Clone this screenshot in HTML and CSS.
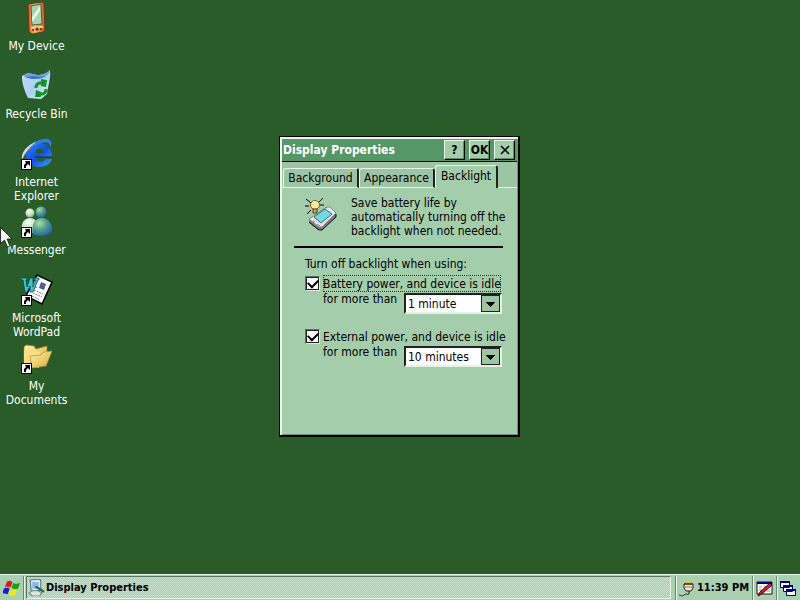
FILE: index.html
```html
<!DOCTYPE html>
<html lang="en">
<head>
<meta charset="utf-8">
<title>Display Properties</title>
<link rel="stylesheet" href="styles.css">
</head>
<body>
<svg width="0" height="0" class="defs" aria-hidden="true">
  <defs>
    <linearGradient id="gold" x1="0" y1="0" x2="1" y2="1"><stop offset="0" stop-color="#fff3a8"/><stop offset="1" stop-color="#d9a93c"/></linearGradient>
    <linearGradient id="bin" x1="0" y1="0" x2="1" y2="1"><stop offset="0" stop-color="#e6f4ff"/><stop offset=".5" stop-color="#a9cdf0"/><stop offset="1" stop-color="#e8f4fb"/></linearGradient>
    <linearGradient id="blue" x1="0" y1="0" x2="1" y2="1"><stop offset="0" stop-color="#2f86f0"/><stop offset=".5" stop-color="#1450d8"/><stop offset="1" stop-color="#3c9cff"/></linearGradient>
    <linearGradient id="orange" x1="0" y1="0" x2="1" y2="0"><stop offset="0" stop-color="#c4641c"/><stop offset=".4" stop-color="#ffb466"/><stop offset="1" stop-color="#b4601f"/></linearGradient>
    <radialGradient id="teal" cx=".35" cy=".3" r=".8"><stop offset="0" stop-color="#a8dcae"/><stop offset=".5" stop-color="#4f9c84"/><stop offset="1" stop-color="#2058c0"/></radialGradient>
    <radialGradient id="pale" cx=".4" cy=".3" r=".8"><stop offset="0" stop-color="#fbfff6"/><stop offset=".6" stop-color="#b8dcb8"/><stop offset="1" stop-color="#4c8cb0"/></radialGradient>
    <g id="shortcut">
      <rect x=".5" y="21.500" width="10" height="10" fill="#fff" stroke="#000"/>
      <path d="M4 23h5v5l-2-2-2 2v2H3v-3l2-2z" fill="#000"/>
    </g>
  </defs>
</svg>
<main class="desktop">
  <nav class="icons" aria-label="Desktop">
    <a class="item" href="#device">
      <svg viewBox="0 0 32 32"><path d="M7 2l14-2 2 1 1 27-2 2-11 2-3-2z" fill="url(#orange)" stroke="#6e3510"/><path d="M10 4l10-2 1 20-10 1z" fill="#a9d4b2" stroke="#4d5f4a"/><path d="M11 15l8-11v5l-8 11z" fill="#e5f7e2"/><path d="M10 26l12-1" stroke="#ffd08a" stroke-width="2"/><circle cx="12" cy="28" r="1" fill="#5a2a0c"/><circle cx="16" cy="27" r="1.500" fill="#5a2a0c"/><circle cx="20" cy="27" r="1" fill="#5a2a0c"/></svg>
      <span>My Device</span>
    </a>
    <a class="item" href="#bin">
      <svg viewBox="0 0 32 32"><path d="M1 6l6-3 9 2c5 0 9-1 13-5 1 8-2 16-3 24l-6 5-13-1C4 22 1 14 1 6z" fill="url(#bin)"/><path d="M2 6l5-3 9 2c5 0 9-1 13-5 0 4-6 9-14 9-5 0-9-1-13-3z" fill="#6da2e2"/><path d="M4 7c7 3 15 3 22-2-4 2-9 2-13 1z" fill="#3c74c8"/><path d="M2 7l11 3c-3 6-4 10-5 17C4 20 2 14 2 7z" fill="#b4d4f6"/><g fill="none" stroke="#12942a" stroke-width="3"><path d="M15 18c0-5 4-6 7-4"/><path d="M25 19c0 5-4 6-7 4"/></g><path d="M20 9l6 1-1 7-5-1zM20 27l-6 0 1-7 5 2z" fill="#12942a"/></svg>
      <span>Recycle Bin</span>
    </a>
    <a class="item" href="#internet">
      <svg viewBox="0 0 32 32"><path fill-rule="evenodd" d="M18 5c8 0 13 5 13 14H15c1 6 8 6 9 2h7c-2 5-6 8-13 8C10 29 5 24 5 17S10 5 18 5zM14 15h9c0-6-8-6-9 0z" fill="url(#blue)"/><path d="M14 19h17" stroke="#0a2878"/><path d="M1 23C-1 13 10 3 23 1c7-1 9 3 6 9 1-5-3-7-9-5C11 8 4 14 1 23z" fill="#2f7ce8"/><path d="M1 22C0 13 7 7 15 4 9 9 4 14 1 22z" fill="#eed8c0"/><use href="#shortcut"/></svg>
      <span>Internet Explorer</span>
    </a>
    <a class="item" href="#messenger">
      <svg viewBox="0 0 32 32"><path d="M1 27c-2-9 2-15 8-15s8 5 8 15z" fill="url(#pale)"/><circle cx="9" cy="7" r="4.500" fill="url(#pale)"/><path d="M12 28c-2-10 2-16 9-16 6 0 11 6 10 14-4 4-14 5-19 2z" fill="url(#teal)"/><circle cx="20" cy="6" r="5.500" fill="url(#teal)"/><use href="#shortcut"/></svg>
      <span>Messenger</span>
    </a>
    <a class="item" href="#wordpad">
      <svg viewBox="0 0 32 32"><path d="M16 1l15 7-10 22-16-8z" fill="#fff" stroke="#000" stroke-width="1.500"/><path d="M20 8l5 2-2 6-5-2z" fill="#405aa0"/><path d="M21 10l2 1-1 2z" fill="#e05070"/><path d="M14 13l3 1M13 16l9 4M12 19l9 4M11 22l8 4" stroke="#826a9a" stroke-dasharray="2 1"/><path d="M0 4h6v2H5l1 7 3-9h3v9l3-7h-2V4h5v2h-1l-5 12H9v-6l-3 6H4L2 6H0z" fill="#38c8cc" stroke="#053e46" stroke-width=".7"/><use href="#shortcut"/></svg>
      <span>Microsoft WordPad</span>
    </a>
    <a class="item" href="#documents">
      <svg viewBox="0 0 32 32"><path d="M3 5l2-2 8 1 2 3 11-3v17L8 26l-5-3z" fill="url(#gold)" stroke="#a8822c" stroke-width=".7"/><path d="M3 8l16 2-1 16-15-2z" fill="#f8df85"/><path d="M9 14l11-1 3-3 8-1-6 15-14 2z" fill="url(#gold)" stroke="#b58a2e" stroke-width=".7"/><use href="#shortcut"/></svg>
      <span>My Documents</span>
    </a>
  </nav>

  <section class="dialog" role="dialog" aria-labelledby="dialog-title">
    <header class="titlebar">
      <h1 id="dialog-title">Display Properties</h1>
      <button type="button" aria-label="Help">?</button>
      <button type="button">OK</button>
      <button type="button" aria-label="Close"><svg class="close" viewBox="0 0 10 10"><path d="M1 1l8 8M9 1L1 9" stroke="#000" stroke-width="1.500"/></svg></button>
    </header>
    <div class="tabs" role="tablist">
      <button type="button" role="tab">Background</button>
      <button type="button" role="tab">Appearance</button>
      <button type="button" role="tab" aria-selected="true" class="active">Backlight</button>
    </div>
    <div class="panel" role="tabpanel">
      <div class="intro">
        <svg class="lamp" viewBox="0 0 34 34"><g stroke="#000"><path d="M1 2l5 4M0 9h4M2 17l4-4M18 1l-4 4M15 8h4"/></g><path d="M4 22L21 10l3 0 7 7v3L17 33h-4L4 26z" fill="#777c80"/><path d="M4 22L22 10l3 0 6 6-14 14h-3z" fill="#e6e6ea" stroke="#888"/><path d="M31 17v3L17 33h-3l-10-8" fill="none" stroke="#111"/><path d="M9 20l11-8 7 5-11 9z" fill="#70dce0" stroke="#468"/><path d="M12 27l3 2M8 24l2 1" stroke="#889"/><circle cx="10" cy="8" r="4.500" fill="#ffe89c" stroke="#7a5a10"/><path d="M8 6l2-1" stroke="#fff" stroke-width="2"/><path d="M8 12h4v4H8z" fill="#d5ac35" stroke="#443"/></svg>
        <p>Save battery life by<br>automatically turning off the<br>backlight when not needed.</p>
      </div>
      <hr>
      <form class="options">
        <p class="lead">Turn off backlight when using:</p>
        <div class="option">
          <input type="checkbox" id="battery" checked>
          <label for="battery" class="focused">Battery power, and device is idle</label>
          <label for="battery-time" class="more">for more than</label>
          <select id="battery-time"><option>1 minute</option><option>5 minutes</option></select>
        </div>
        <div class="option">
          <input type="checkbox" id="external" checked>
          <label for="external">External power, and device is idle</label>
          <label for="external-time" class="more">for more than</label>
          <select id="external-time"><option>10 minutes</option><option>1 minute</option></select>
        </div>
      </form>
    </div>
  </section>
  <svg class="cursor" viewBox="0 0 12 21" aria-hidden="true"><path d="M.5.500v16l4-3.500 3 7 2.500-1-3-7h5z" fill="#fff" stroke="#000" stroke-width=".7"/></svg>
</main>

<footer class="taskbar">
  <button type="button" class="start" aria-label="Start">
    <svg viewBox="0 0 18 18"><path d="M4 2c2-2 4-1 6 0L8 8C6 7 4 7 2 8z" fill="#e01818"/><path d="M11 3c2 2 4 1 7 0l-2 6c-2 1-5 1-7-1z" fill="#18a018"/><path d="M1 9c2-1 4-1 6 0l-2 6c-2-1-4-1-6 0z" fill="#1420d0"/><path d="M8 10c2 1 5 1 7 0l-2 6c-2 1-5 1-7-1z" fill="#f0e818"/></svg>
  </button>
  <button type="button" class="task">
    <svg viewBox="0 0 16 16"><path d="M2 1l8-1 2 1v9l-2 1H3z" fill="#d8e4f0" stroke="#5d7489"/><path d="M4 3h6v6H4z" fill="#86b8e8"/><path d="M1 13c3-3 8-3 12 0l-2 3H4z" fill="#dfe6e4" stroke="#708080"/><path d="M7 7l8 5" stroke="#206850" stroke-width="2"/></svg>
    <span>Display Properties</span>
  </button>
  <div class="tray">
    <svg viewBox="0 0 17 17"><path d="M8 4V0M13 4V0" stroke="#d9c820" stroke-width="2"/><path d="M6 4h9M6 4v4l2 3h5l2-3V4z" fill="#f0e8c8" stroke="#222"/><path d="M11 11v3c-2 1-3-1-5 1s-3 0-5 0" fill="none" stroke="#222"/><path d="M7 7h7" stroke="#c86060"/></svg>
    <time>11:39 PM</time>
  </div>
  <button type="button" class="square" aria-label="Input panel"><svg viewBox="0 0 17 17"><path d="M1 2h15v12H1z" fill="#fff" stroke="#111"/><path d="M1 3h15" stroke="#000080" stroke-width="2"/><path d="M3 7h3M8 7h3M3 10h3M11 11h3" stroke="#888"/><path d="M2 16l2-4L14 3l2 2-9 8z" fill="#d02030" stroke="#400"/></svg></button>
  <button type="button" class="square" aria-label="Desktop"><svg viewBox="0 0 17 17"><g fill="#fff" stroke="#000080"><path d="M.5 1.500h9v6h-9zM3.500 5.500h9v6h-9zM6.500 9.500h9v6h-9z"/><path d="M0 2h10M3 6h10M6 10h10" stroke-width="2"/></g></svg></button>
</footer>
</body>
</html>
```
FILE: styles.css
```css
* { box-sizing: border-box; }

body {
  margin: 0;
  height: 100vh;
  display: flex;
  flex-direction: column;
  background: #295c29;
  color: #000;
  font: 12px/14px "DejaVu Sans Condensed", "DejaVu Sans", sans-serif;
  overflow: hidden;
}

button, select { font: inherit; color: inherit; }
p, h1 { margin: 0; }
.defs { position: absolute; }

.desktop { position: relative; flex: 1; }

.icons { display: grid; grid-auto-rows: 68px; width: 73px; }
.item {
  display: flex;
  flex-direction: column;
  align-items: center;
  gap: 5px;
  padding-top: 2px;
  color: #fff;
  text-align: center;
  text-decoration: none;
}
.item svg { width: 32px; height: 32px; flex: none; }

.cursor { position: absolute; left: 0; top: 227px; width: 12px; height: 21px; }

.dialog {
  position: absolute;
  left: 279px;
  top: 136px;
  width: 241px;
  height: 301px;
  display: flex;
  flex-direction: column;
  border: 1px solid #000;
  border-width: 1px 2px 2px 1px;
  background: #a4cdac;
  box-shadow: inset 2px 2px #ecf7ec, inset -1px -1px #71917a;
  padding: 2px 1px 1px 2px;
}

.titlebar {
  display: flex;
  align-items: center;
  gap: 4px;
  height: 23px;
  padding: 0 2px 0 1px;
  background: #559766;
  border-bottom: 1px solid #000;
  color: #fff;
}
.titlebar h1 { flex: 1; font-size: 12px; font-weight: bold; }
.titlebar button {
  width: 21px;
  height: 20px;
  padding: 0;
  display: grid;
  place-items: center;
  background: #a4cdac;
  border: 1px solid #000;
  border-color: #edf8ed #000 #000 #edf8ed;
  box-shadow: inset -1px -1px #668b70;
  color: #000;
  font-weight: bold;
}
.close { width: 10px; height: 10px; }

.tabs {
  display: flex;
  align-items: flex-end;
  height: 26px;
  padding-left: 1px;
  box-shadow: inset 0 -1px #e8f5e8;
  background: #9dc4a5;
}
.tabs button {
  width: 76px;
  height: 20px;
  padding: 0;
  background: #9dc4a5;
  border: 1px solid #ecf7ec;
  border-right: 2px solid #222;
  border-radius: 3px 3px 0 0;
  white-space: nowrap;
}
.tabs .active { width: 63px; height: 23px; padding-bottom: 2px; border-bottom: 0; background: #a4cdac; }

.panel { flex: 1; padding: 7px 8px 0 12px; }
.intro { display: flex; }
.intro p { white-space: nowrap; padding-top: 1px; }
.lamp { width: 34px; height: 34px; margin: 2px 12px 0 11px; flex: none; }
hr { height: 2px; margin: 8px 6px 9px 0; border: 0; background: #000; }

.options { padding-left: 11px; }
.lead { margin-bottom: 4px; }
.option {
  display: grid;
  grid-template-columns: 14px 77px 98px;
  grid-template-rows: 17px 22px;
  column-gap: 4px;
  margin-bottom: 14px;
  white-space: nowrap;
}
.option label:first-of-type { grid-column: 2 / 4; justify-self: start; line-height: 16px; padding-top: 1px; }
.option .more { grid-column: 2; }
.focused { outline: 1px dotted #333; outline-offset: -1px; }

input[type="checkbox"] {
  appearance: none;
  width: 15px;
  height: 15px;
  margin: 1px 0 0;
  border: 1px solid #56705c;
  border-color: #56705c #d9ebda #d9ebda #56705c;
  background: #fff;
  box-shadow: inset 0 0 0 1px #222;
  display: grid;
  place-items: center;
}
input[type="checkbox"]:checked::before {
  content: "";
  width: 8px;
  height: 5px;
  border: solid #000;
  border-width: 0 0 2px 2px;
  transform: translateY(-1px) rotate(-45deg);
}

select {
  appearance: none;
  width: 98px;
  height: 21px;
  margin-top: 1px;
  padding: 0 20px 0 2px;
  border: 2px solid #222;
  border-color: #222 #e5f3e5 #e5f3e5 #222;
  border-radius: 0;
  background:
    conic-gradient(from -45deg at 50% 100%, #000 90deg, transparent 0) right 5px top 7px / 9px 5px no-repeat,
    linear-gradient(#9cc5a4, #9cc5a4) right 1px top 1px / 17px 15px no-repeat,
    linear-gradient(#222, #222) right / 19px 17px no-repeat,
    #fff;
}

.taskbar {
  display: flex;
  align-items: stretch;
  height: 26px;
  padding-top: 1px;
  background: #a9d0b1;
  border-top: 1px solid #e8f5e8;
  font-size: 11px;
  font-weight: bold;
}
.taskbar button { border: 0; padding: 0; background: none; }
.taskbar svg { width: 17px; height: 17px; flex: none; }
.start { width: 23px; display: grid; place-items: center; }
.taskbar .task {
  flex: 1;
  display: flex;
  align-items: center;
  gap: 1px;
  margin: 0 4px 1px 3px;
  padding-left: 1px;
  border: 1px solid #577860;
  border-color: #577860 #e8f5e8 #e8f5e8 #577860;
  background: repeating-conic-gradient(#a9d0b1 0 25%, #c5dfca 0 50%) 0 0 / 2px 2px;
}
.tray { display: flex; align-items: center; gap: 2px; padding: 0 3px 0 2px; border-left: 1px solid #668b70; box-shadow: inset 1px 0 #e8f5e8; }
.taskbar .square { width: 24px; display: grid; place-items: center; border-left: 1px solid #668b70; box-shadow: inset 1px 0 #e8f5e8; }
.taskbar .start { box-shadow: 1px 0 #668b70, 2px 0 #e8f5e8; }
```
